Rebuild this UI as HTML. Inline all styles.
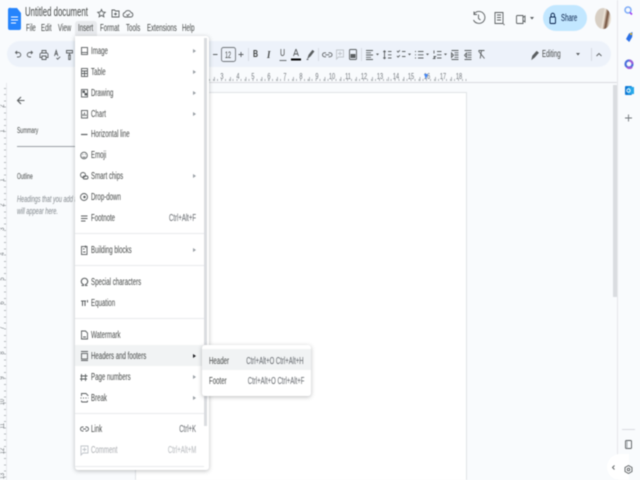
<!DOCTYPE html>
<html><head><meta charset="utf-8"><style>
html,body{margin:0;padding:0;width:640px;height:480px;overflow:hidden;background:#f9fbfd;font-family:"Liberation Sans",sans-serif;color:#444746}
#w{position:relative;width:640px;height:480px;overflow:hidden;filter:blur(.4px)}
.b{position:absolute}
.t{position:absolute;white-space:nowrap;font-size:10px;line-height:12px;transform-origin:0 50%;transform:translateY(1px) scaleX(.61);z-index:5}
.r{position:absolute;white-space:nowrap;font-size:10px;line-height:12px;transform-origin:100% 50%;transform:translateY(1px) scaleX(.6);z-index:5;color:#5f6368}
.n{position:absolute;font-size:8px;line-height:8px;width:12px;text-align:center;transform:scaleX(.7);color:#70757a}
.v{position:absolute;font-size:7px;line-height:8px;width:12px;text-align:center;left:-3px;transform:rotate(-90deg) scaleX(.8);color:#70757a}
.sep{position:absolute;left:75px;width:129px;height:1px;background:#e8eaed;z-index:4}
svg{position:absolute;left:0;top:0;z-index:4}
</style></head><body><div id="w">

<!-- toolbar -->
<div class="b" style="left:7px;top:41px;width:604px;height:26px;border-radius:13px;background:#edf2fa"></div>
<!-- horizontal ruler -->
<div class="b" style="left:209px;top:82px;width:409px;height:1px;background:#dadce0"></div>
<div class="b" style="left:209px;top:79px;width:258px;height:2px;background:repeating-linear-gradient(90deg,#b4b8bc 0 1px,transparent 1px 3.95px)"></div>
<div class="b" style="left:214px;top:77px;width:253px;height:4px;background:repeating-linear-gradient(90deg,#b4b8bc 0 1px,transparent 1px 15.8px)"></div>
<div class="n" style="left:216px;top:73px">3</div><div class="n" style="left:232px;top:73px">4</div><div class="n" style="left:247px;top:73px">5</div><div class="n" style="left:263px;top:73px">6</div><div class="n" style="left:279px;top:73px">7</div><div class="n" style="left:295px;top:73px">8</div><div class="n" style="left:311px;top:73px">9</div><div class="n" style="left:326px;top:73px">10</div><div class="n" style="left:342px;top:73px">11</div><div class="n" style="left:358px;top:73px">12</div><div class="n" style="left:374px;top:73px">13</div><div class="n" style="left:390px;top:73px">14</div><div class="n" style="left:405px;top:73px">15</div><div class="n" style="left:421px;top:73px">16</div><div class="n" style="left:437px;top:73px">17</div><div class="n" style="left:453px;top:73px">18</div>
<div class="b" style="left:424px;top:74px;width:4px;height:5px;background:#4285f4;clip-path:polygon(0 0,100% 0,50% 100%)"></div>

<!-- left ruler -->
<div class="b" style="left:6px;top:83px;width:1px;height:397px;background:#e8eaed"></div>
<div class="b" style="left:4px;top:88px;width:2px;height:392px;background:repeating-linear-gradient(180deg,#b4b8bc 0 1px,transparent 1px 6.17px)"></div>
<div class="v" style="top:102px">2</div><div class="v" style="top:127px">1</div><div class="v" style="top:176px">1</div><div class="v" style="top:201px">2</div><div class="v" style="top:225px">3</div><div class="v" style="top:250px">4</div><div class="v" style="top:275px">5</div><div class="v" style="top:299px">6</div><div class="v" style="top:324px">7</div><div class="v" style="top:349px">8</div><div class="v" style="top:374px">9</div><div class="v" style="top:398px">10</div><div class="v" style="top:422px">11</div><div class="v" style="top:447px">12</div><div class="v" style="top:472px">13</div>

<!-- page -->
<div class="b" style="left:135px;top:92px;width:330px;height:388px;background:#fff;border:1px solid #e0e3e7;border-bottom:0"></div>

<!-- doc scrollbar, side panel -->
<div class="b" style="left:613px;top:85px;width:4px;height:212px;background:#dadce0"></div>
<div class="b" style="left:617px;top:0;width:1px;height:480px;background:#e6e8eb"></div>
<div class="b" style="left:622px;top:429px;width:13px;height:1px;background:#dadce0"></div>
<div class="b" style="left:607px;top:454px;width:22px;height:26px;border-radius:13px 0 0 13px;background:#fff"></div>

<!-- left panel -->
<div class="t" style="left:17px;top:125px;font-size:8px;transform:scaleX(.62)">Summary</div>
<div class="b" style="left:17px;top:146px;width:58px;height:1px;background:#9aa0a6"></div>
<div class="t" style="left:17px;top:171px;font-size:8px;transform:scaleX(.62)">Outline</div>
<div class="t" style="left:17px;top:193px;font-size:9px;font-style:italic;color:#80868b;z-index:1;transform:scaleX(.62)">Headings that you add to</div>
<div class="t" style="left:17px;top:205px;font-size:9px;font-style:italic;color:#80868b;z-index:1;transform:scaleX(.62)">will appear here.</div>

<!-- main menu -->
<div class="b" style="left:75px;top:21px;width:22px;height:15px;background:#e8eaed;border-radius:3px 3px 0 0"></div>
<div class="b" style="left:75px;top:36px;width:134px;height:434px;background:#fff;box-shadow:0 1px 4px rgba(60,64,67,.35);border-radius:0 3px 3px 3px;z-index:2"></div>
<div class="b" style="left:75px;top:345px;width:129px;height:21px;background:#f1f3f4;z-index:3"></div>
<div class="b" style="left:204px;top:38px;width:3px;height:388px;background:#dadce0;z-index:3"></div>
<div class="sep" style="top:233px"></div><div class="sep" style="top:265px"></div><div class="sep" style="top:318px"></div><div class="sep" style="top:413px"></div><div class="sep" style="top:466px"></div>

<!-- sub menu -->
<div class="b" style="left:202px;top:345px;width:109px;height:51px;background:#fff;box-shadow:0 1px 4px rgba(60,64,67,.35);border-radius:3px;z-index:3"></div>
<div class="b" style="left:202px;top:349px;width:109px;height:21px;background:#f1f3f4;z-index:3"></div>

<!-- share -->
<div class="b" style="left:543px;top:5px;width:44px;height:26px;border-radius:13px;background:#c2e7ff"></div>

<!-- avatar -->
<div class="b" style="left:595px;top:8px;width:16px;height:21px;border-radius:50%;background:linear-gradient(100deg,#d8cfc4 0 45%,#efe6da 55%,#6d4a35 70%,#e8dfd2 85%)"></div>

<svg width="640" height="480" viewBox="0 0 640 480" fill="none" stroke="#5a5e60" stroke-width=".9">
<!-- docs logo -->
<path d="M11 8h6l4 5v15a2 2 0 0 1-2 2H10a2 2 0 0 1-2-2V10a2 2 0 0 1 3-2z" fill="#2684fc" stroke="none"/>
<path d="M11 17h7M11 20h7M11 23h5" stroke="#fff"/>
<!-- star/folder/cloud -->
<path d="M101.500 9.500l1.100 2.500 2.700.3-2 1.800.6 2.700-2.400-1.400-2.400 1.400.6-2.700-2-1.800 2.700-.3z"/>
<path d="M112 10h2.500l1 1h3.500v6h-7z M114 14h3M115.500 12.500v3"/>
<path d="M125 17a2.300 2.300 0 0 1 0-4.500 3.300 3.300 0 0 1 6 0 2.300 2.300 0 0 1 0 4.500z M126.500 14.500l1.200 1.200 2-2"/>
<!-- toolbar left -->
<path d="M16 52.500h2.500a2.200 2.200 0 0 1 0 4.500h-1.500M17 51l-1.500 1.500 1.500 1.500"/>
<path d="M32 52.500h-2.500a2.200 2.200 0 0 0 0 4.500h1.500M31 51l1.500 1.500-1.500 1.500"/>
<path d="M41 53h6a1.500 1.500 0 0 1 1 1v3.500h-2M42 57.500h-2V54a1.500 1.500 0 0 1 1-1M42 53v-2.500h4V53M42 56h4v3.500h-4z"/>
<path d="M54.500 56l1.700-5.500 1.700 5.500M55.300 54h2M56.500 58l1.200 1.200 2.500-2.500"/>
<path d="M66.500 50.500h6v2.500h-6zM69.500 53v2M68.700 55h1.600v4.500h-1.600z"/>
<!-- font size -->
<path d="M213 54.500h4.500M238.500 54.500h5M241 52v5"/>
<rect x="221.500" y="47.500" width="14" height="14" rx="2" stroke="#70757a"/>
<path d="M248.500 48v13M318.500 48v13M361.500 48v13M591.500 48v13" stroke="#d3d8df"/>
<path d="M296 49l-2.500 7M296 49l2.500 7M294.300 54h3.400"/>
<rect x="291" y="58.500" width="10" height="2" fill="#000" stroke="none"/>
<path d="M279.500 60.500h7"/>
<path d="M308 58l1-3 3.500-4.500 1.300 1-3.500 4.500z" fill="#5a5e60"/><path d="M306.500 59.500h2"/>
<!-- link/comment/image -->
<path d="M326 52.800h-1.500a2 2 0 0 0 0 4h1.500M328.500 52.800h1.500a2 2 0 0 1 0 4h-1.500M325.300 54.800h4"/>
<path d="M336.500 50h7v7h-5l-2 2zM340 51.500v4M338 53.500h4" stroke="#c0c5ca"/>
<rect x="349.500" y="49.500" width="7" height="10" rx="1"/><rect x="350.500" y="54" width="5" height="4" fill="#5a5e60" stroke="none"/>
<!-- align etc -->
<path d="M366 50.500h7M366 52.800h5M366 55h7M366 57.300h5M366 59.500h7"/>
<path d="M376 53.500h3l-1.500 2z M408 53.500h3l-1.500 2z M426 53.500h3l-1.500 2z M444 53.500h3l-1.500 2z" fill="#5a5e60" stroke="none"/>
<path d="M384.500 51v7.500M383.300 52l1.200-1.200 1.200 1.200M383.300 57.500l1.200 1.200 1.200-1.200M388 51.500h3.500M388 54.800h3.500M388 58h3.500"/>
<path d="M397 51l1.100 1.100 1.800-1.800M397 56l1.100 1.100 1.800-1.800M402 51.500h3.500M402 56.500h3.500"/>
<path d="M415 51.500h1M415 54.800h1M415 58h1M418 51.500h5.500M418 54.800h5.500M418 58h5.500"/>
<path d="M434 50.500v3M433.500 56.500h2l-2 2h2M437 51.500h4.500M437 54.800h4.500M437 58h4.500"/>
<path d="M451.500 50.500h7M454.500 52.800h4M454.500 55h4M454.500 57.300h4M451.500 59.500h7M451.500 53v4.500l2-2.200z"/>
<path d="M464.500 50.500h7M467.500 52.800h4M467.500 55h4M467.500 57.300h4M464.500 59.500h7M466.500 53v4.500l-2-2.200z"/>
<path d="M478.500 50.500h6M481.500 50.500l-1.300 8M478.500 51l6 7.500"/>
<!-- editing -->
<path d="M532 59l.7-3 4-4.500 1.600 1.300-4 4.500z" fill="#5a5e60"/>
<path d="M576 53h4l-2 2.500z" fill="#5a5e60" stroke="none"/>
<path d="M596.500 56l2.500-2.500 2.500 2.500"/>
<!-- top right -->
<path d="M474 14a6 6 0 1 1-.5 6M474 11.500v3h3M478.500 14.500v4l2 1.500"/>
<path d="M495 12.500h8v11h-8zM497 15h4M497 17.500h4M497 20h4M503.500 24l1 1"/>
<path d="M517.500 15.500h5.500v8h-5.500a1 1 0 0 1-1-1v-6a1 1 0 0 1 1-1zM523 17.500l2-1.500v6l-2-1.500"/>
<path d="M530 17h4l-2 2.500z" fill="#5a5e60" stroke="none"/>
<rect x="550" y="17" width="5.500" height="6.500" rx="1" stroke="#041e49"/><path d="M551 17v-2a1.700 1.700 0 0 1 3.500 0v2" stroke="#041e49"/>
<!-- back arrow -->
<path d="M24.500 100.500h-7M21 97l-3.500 3.500L21 104" stroke-width="1.100"/>
<!-- side icons -->
<circle cx="628" cy="10" r="3" stroke="#7baaf7" stroke-width="1.500"/><path d="M630 12.500l2 2" stroke="#a142f4" stroke-width="1.700"/>
<path d="M626 39l3-5.500 3.500-1.500-.3 5-3 5z" fill="#2a70e8" stroke="none"/><circle cx="631" cy="34" r="1" fill="#fbbc04" stroke="none"/>
<circle cx="629" cy="64" r="3.500" stroke="#4b6fdc" stroke-width="2.200"/><path d="M629 60.500a3.500 3.500 0 0 1 3.500 3.500M627 67a3.500 3.500 0 0 0 5 0" stroke="#a05ad8" stroke-width="2"/>
<rect x="625" y="86" width="7" height="9" rx="1" fill="#0f78d4" stroke="none"/><rect x="628" y="87" width="6" height="7" fill="#28a8ea" stroke="none"/><circle cx="628.500" cy="90.500" r="1.700" stroke="#fff"/>
<path d="M628.500 114.500v7M625 118h7" stroke="#70757a"/>
<rect x="625.500" y="440.500" width="6" height="8" rx="1"/><path d="M627 440.500v8" stroke="#9aa0a6"/>
<path d="M628.500 465.500l3.500 2v4l-3.500 2-3.500-2v-4z"/><circle cx="628.500" cy="469.500" r="1.300"/>
<path d="M614.500 465.500l-2 2 2 2"/>
</svg>

<!-- top text -->
<div class="t" style="left:25px;top:5px;font-size:13px;line-height:14px;transform:scaleX(.6)">Untitled document</div>
<div class="t" style="left:26px;top:22px">File</div><div class="t" style="left:41px;top:22px">Edit</div><div class="t" style="left:58px;top:22px">View</div><div class="t" style="left:78px;top:22px">Insert</div><div class="t" style="left:100px;top:22px">Format</div><div class="t" style="left:126px;top:22px">Tools</div><div class="t" style="left:147px;top:22px">Extensions</div><div class="t" style="left:182px;top:22px">Help</div>
<div class="t" style="left:561px;top:12px;color:#041e49">Share</div>
<div class="t" style="left:542px;top:48px">Editing</div>
<div class="t" style="left:225px;top:48px;font-size:9px">12</div>
<div class="t" style="left:253px;top:49px;font-weight:bold;font-size:10px;transform:scaleX(.7)">B</div>
<div class="t" style="left:267px;top:49px;font-style:italic;font-family:'Liberation Serif',serif;font-weight:bold;font-size:11px;transform:scaleX(.8)">I</div>
<div class="t" style="left:280px;top:48px;font-size:10px;transform:scaleX(.7)">U</div>

<!-- menu labels -->
<div class="t" style="left:91px;top:45px">Image</div>
<div class="t" style="left:91px;top:66px">Table</div>
<div class="t" style="left:91px;top:87px">Drawing</div>
<div class="t" style="left:91px;top:108px">Chart</div>
<div class="t" style="left:91px;top:128px">Horizontal line</div>
<div class="t" style="left:91px;top:149px">Emoji</div>
<div class="t" style="left:91px;top:170px">Smart chips</div>
<div class="t" style="left:91px;top:191px">Drop-down</div>
<div class="t" style="left:91px;top:212px">Footnote</div>
<div class="r" style="right:444px;top:212px">Ctrl+Alt+F</div>
<div class="t" style="left:91px;top:244px">Building blocks</div>
<div class="t" style="left:91px;top:276px">Special characters</div>
<div class="t" style="left:91px;top:297px">Equation</div>
<div class="t" style="left:91px;top:329px">Watermark</div>
<div class="t" style="left:91px;top:350px">Headers and footers</div>
<div class="t" style="left:91px;top:371px">Page numbers</div>
<div class="t" style="left:91px;top:392px">Break</div>
<div class="t" style="left:91px;top:423px">Link</div>
<div class="r" style="right:444px;top:423px">Ctrl+K</div>
<div class="t" style="left:91px;top:444px;color:#a8abaf">Comment</div>
<div class="r" style="right:444px;top:444px;color:#b4b7bb">Ctrl+Alt+M</div>
<!-- submenu labels -->
<div class="t" style="left:209px;top:355px">Header</div>
<div class="r" style="right:336px;top:355px">Ctrl+Alt+O Ctrl+Alt+H</div>
<div class="t" style="left:209px;top:375px">Footer</div>
<div class="r" style="right:336px;top:375px">Ctrl+Alt+O Ctrl+Alt+F</div>

<!-- menu icons & arrows -->
<svg width="640" height="480" viewBox="0 0 640 480" fill="none" stroke="#5a5e60" stroke-width=".9" style="z-index:6">
<path d="M193 49l3 2-3 2zM193 70l3 2-3 2zM193 91l3 2-3 2zM193 112l3 2-3 2zM193 174l3 2-3 2zM193 248l3 2-3 2zM193 375l3 2-3 2zM193 396l3 2-3 2z" fill="#9aa0a6" stroke="none"/>
<path d="M193 354l3 2-3 2z" fill="#202124" stroke="none"/>
<rect x="81.500" y="47.500" width="6" height="7"/><path d="M81 52.500h7"/>
<rect x="81.500" y="68.500" width="6" height="8"/><path d="M81.500 71h6M81.500 73.500h6M84.500 71v5.500"/>
<rect x="81.500" y="89.500" width="6" height="7.500"/><rect x="82.500" y="90.500" width="2.500" height="2.500" fill="#5a5e60" stroke="none"/><rect x="84.500" y="93" width="2.500" height="2.500" fill="#5a5e60" stroke="none"/>
<rect x="81.500" y="110.500" width="6" height="7.500"/><path d="M83 116v-2M84.500 116v-3.500M86 116v-1.500"/>
<path d="M81 134.500h6.500" stroke-width="1.200"/>
<circle cx="84" cy="155.500" r="3.300"/><path d="M82.500 154.500h.6M85 154.500h.6M82.700 156.700a1.500 1.500 0 0 0 2.600 0"/>
<circle cx="83" cy="175" r="2.500"/><rect x="83" y="176" width="5" height="3" rx="1.500"/>
<circle cx="84" cy="197" r="3.500"/><circle cx="84.500" cy="197" r=".8" fill="#5a5e60"/>
<path d="M81 216h6.500M81 218.500h6.500M81 221h4.500"/>
<rect x="81.500" y="246.500" width="5.500" height="8"/><path d="M83 249h1.500M83 252h2.500"/><path d="M85.500 245.500v2.500M84.500 246.500h2.500" stroke-width=".8"/>
<path d="M81.500 285.500h2v-1a3.200 3.200 0 1 1 2 0v1h2" stroke-width="1.100"/>
<path d="M81 301h5M82.500 301v5M85 301v5M87.500 300v2.500" stroke-width="1"/>
<path d="M81.500 331h4l2 2v6h-6zM83 337h3"/>
<rect x="81.500" y="353.500" width="6" height="5.500"/><path d="M81 351.500h7M81 360.500h7"/>
<path d="M81.500 374v7M85.500 374v7M80.500 376h7M80 379h7" stroke-width=".9"/>
<path d="M81.500 396v-2.500h4.500l2 2V396M81.500 402v-1.500M87.500 402v-1.500M81.500 402h6M80.500 398h1M83 398h1M85.500 398h1M88 398h.5"/>
<path d="M83.500 427h-1a2 2 0 0 0 0 4h1M85.500 427h1a2 2 0 0 1 0 4h-1M83 429h3"/>
<path d="M81 446h7v7h-5l-2 2zM84.500 447.500v4M82.500 449.500h4" stroke="#c0c5ca"/>
</svg>
</div></body></html>
